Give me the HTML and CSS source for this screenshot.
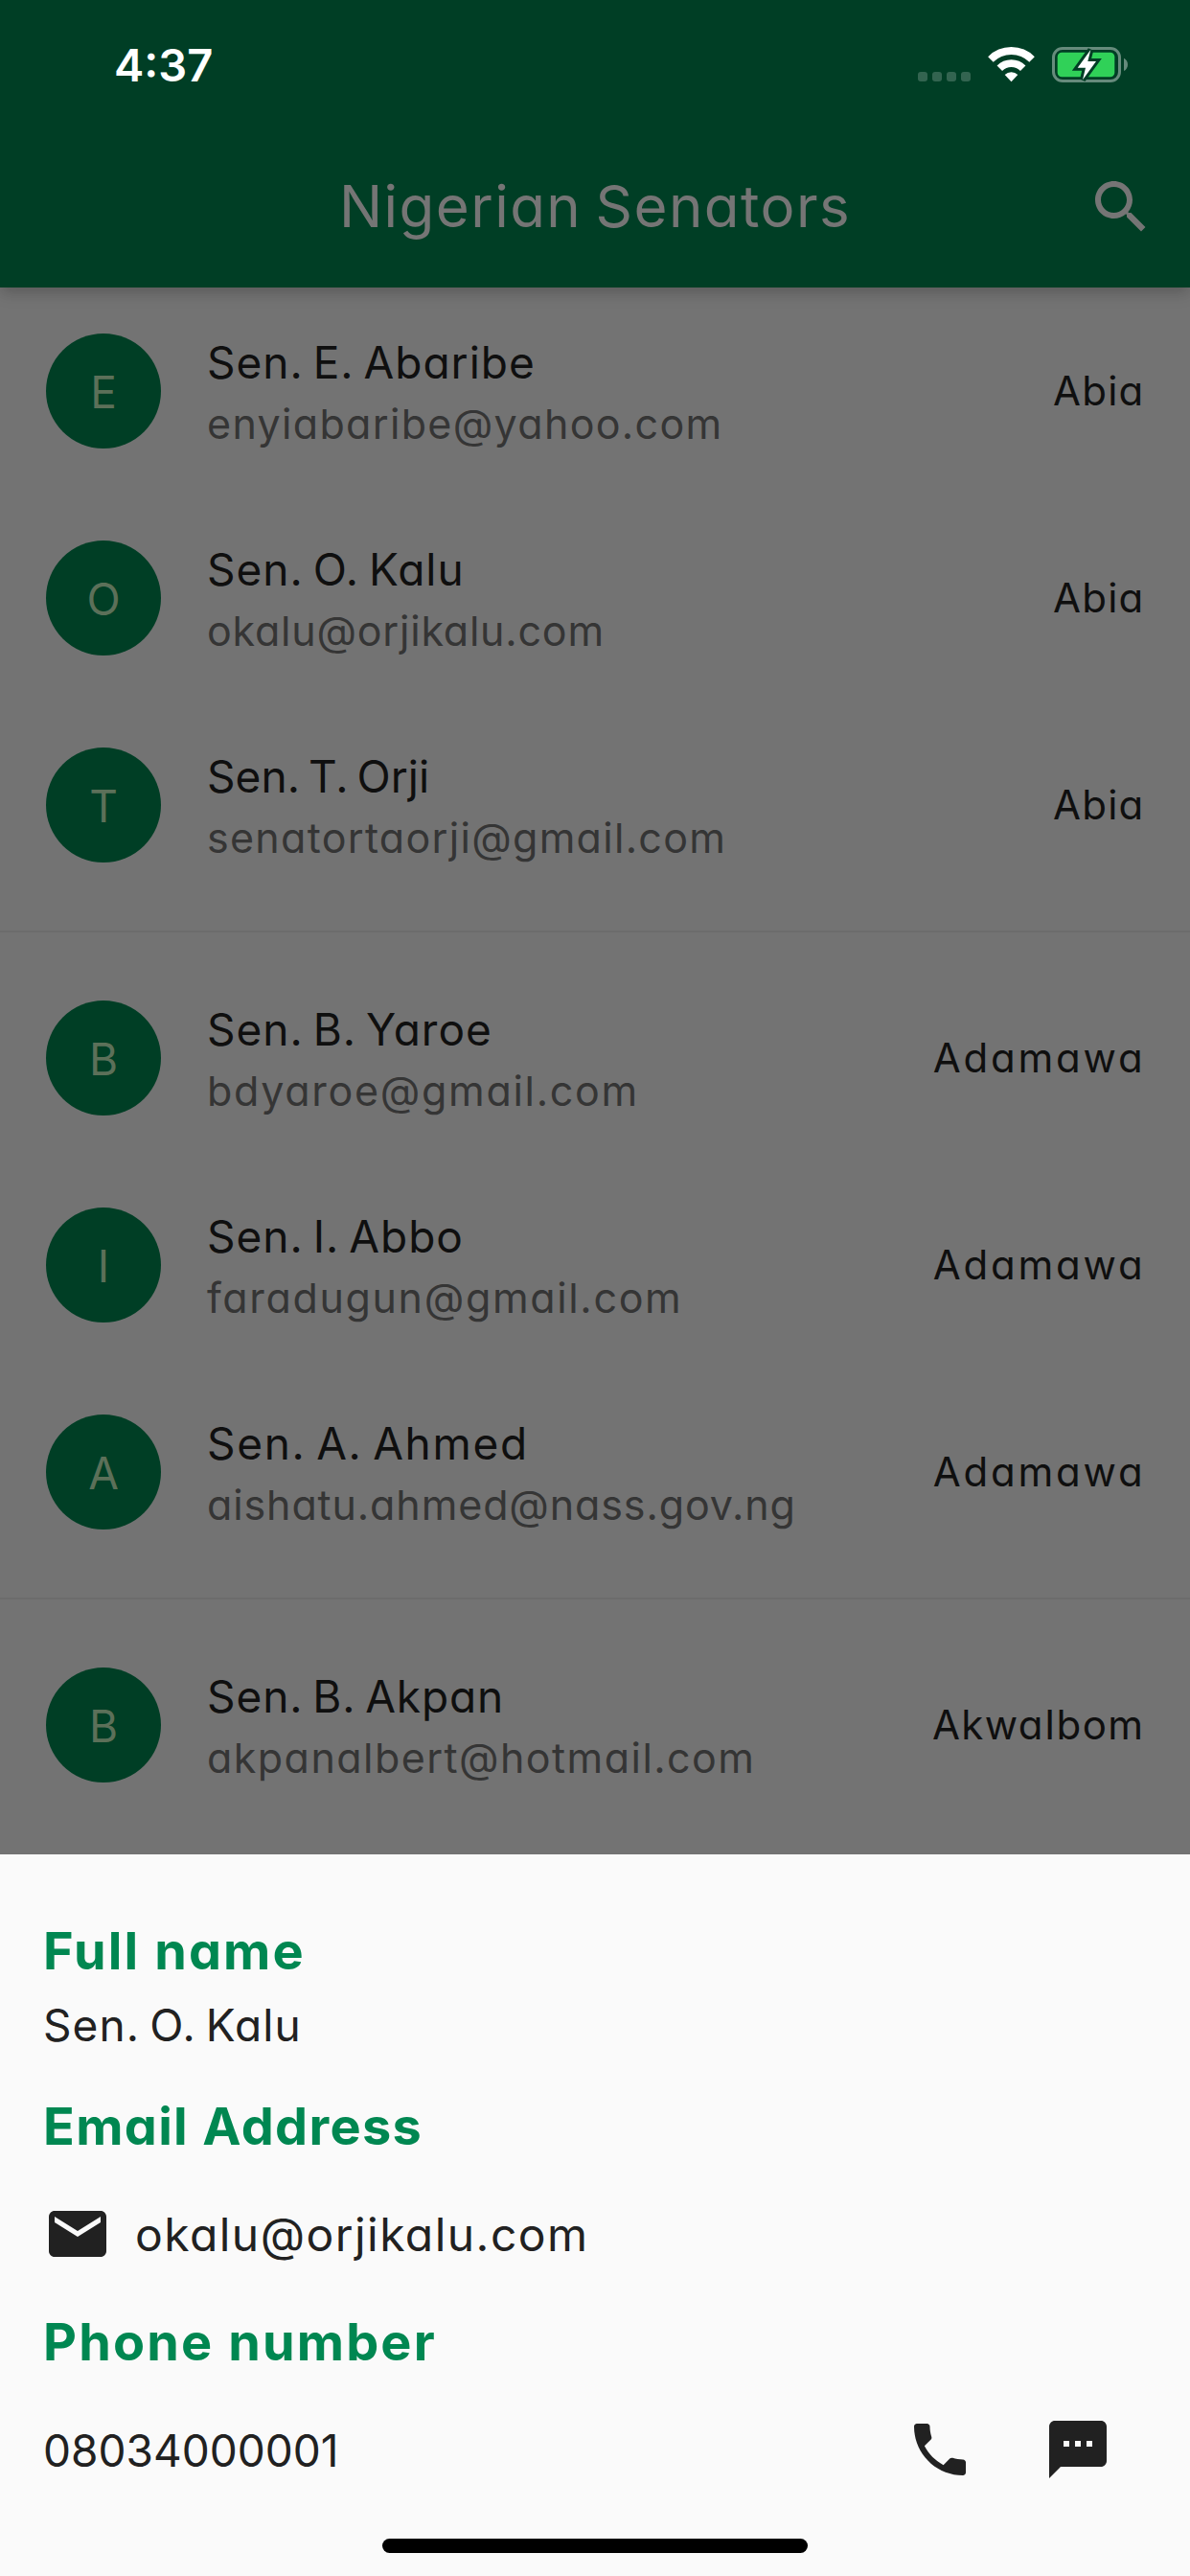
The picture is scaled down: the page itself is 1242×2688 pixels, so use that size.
FILE: index.html
```html
<!DOCTYPE html>
<html lang="en">
<head>
<meta charset="utf-8">
<title>Nigerian Senators</title>
<link rel="stylesheet" href="styles.css">
</head>
<body>
<div class="screen">
  <header class="app-bar">
    <div class="status-bar">
      <span class="time">4:37</span>
      <div class="status-icons">
        <svg width="55" height="37" viewBox="0 0 55 37" fill="#fff" fill-opacity=".2">
          <rect x="0" y="26" width="10" height="10" rx="3"/><rect x="15" y="26" width="10" height="10" rx="3"/><rect x="30" y="26" width="10" height="10" rx="3"/><rect x="45" y="26" width="10" height="10" rx="3"/>
        </svg>
        <svg width="49" height="37" viewBox="-.5 0 49 37">
          <path d="M2.43 12.93A30.5 30.5 0 0 1 45.57 12.93M11.8 22.3A17.2 17.2 0 0 1 36.2 22.3" fill="none" stroke="#fff" stroke-width="7.8"/>
          <path d="M24 36.2L17.2 29A9.6 9.6 0 0 1 30.8 29Z" fill="#fff"/>
        </svg>
        <svg width="79" height="37" viewBox="0 0 79 37">
          <rect x="1.5" y="1.5" width="69" height="34" rx="9.5" fill="none" stroke="#668b7c" stroke-width="3"/>
          <path d="M75 11.7C80.3 14 80.3 22.7 75 25Z" fill="#668b7c"/>
          <rect x="5.7" y="5.7" width="59.6" height="25.6" rx="4.5" fill="#30d158"/>
          <path class="bolt" d="M40.3 3L26.7 21.7H35L32 34.3L46 15H37.3Z"/>
        </svg>
      </div>
    </div>
    <div class="toolbar">
      <h1 class="title">Nigerian Senators</h1>
      <svg class="icon search" viewBox="0 0 24 24"><path d="M15.5 14h-.79l-.28-.27C15.41 12.59 16 11.11 16 9.5 16 5.91 13.09 3 9.5 3S3 5.91 3 9.5 5.91 16 9.5 16c1.61 0 3.09-.59 4.23-1.57l.27.28v.79l5 4.99L20.49 19l-4.99-5zm-6 0C7.01 14 5 11.99 5 9.5S7.01 5 9.5 5 14 7.01 14 9.5 11.99 14 9.5 14z"/></svg>
    </div>
  </header>

  <main class="list">
    <div class="row abaribe"><div class="avatar">E</div><div class="info"><div class="name">Sen. E. Abaribe</div><div class="email">enyiabaribe@yahoo.com</div></div><div class="state abia">Abia</div></div>
    <div class="row kalu"><div class="avatar">O</div><div class="info"><div class="name">Sen. O. Kalu</div><div class="email">okalu@orjikalu.com</div></div><div class="state abia">Abia</div></div>
    <div class="row orji"><div class="avatar">T</div><div class="info"><div class="name">Sen. T. Orji</div><div class="email">senatortaorji@gmail.com</div></div><div class="state abia">Abia</div></div>
    <hr class="divider">
    <div class="row yaroe"><div class="avatar">B</div><div class="info"><div class="name">Sen. B. Yaroe</div><div class="email">bdyaroe@gmail.com</div></div><div class="state adamawa">Adamawa</div></div>
    <div class="row abbo"><div class="avatar">I</div><div class="info"><div class="name">Sen. I. Abbo</div><div class="email">faradugun@gmail.com</div></div><div class="state adamawa">Adamawa</div></div>
    <div class="row ahmed"><div class="avatar">A</div><div class="info"><div class="name">Sen. A. Ahmed</div><div class="email">aishatu.ahmed@nass.gov.ng</div></div><div class="state adamawa">Adamawa</div></div>
    <hr class="divider">
    <div class="row akpan"><div class="avatar">B</div><div class="info"><div class="name">Sen. B. Akpan</div><div class="email">akpanalbert@hotmail.com</div></div><div class="state akwaibom">AkwaIbom</div></div>
  </main>

  <section class="sheet">
    <h2 class="label label-name">Full name</h2>
    <p class="value value-name">Sen. O. Kalu</p>
    <h2 class="label label-email">Email Address</h2>
    <div class="contact">
      <svg class="icon" viewBox="0 0 24 24"><path d="M20 4H4c-1.1 0-1.99.9-1.99 2L2 18c0 1.1.9 2 2 2h16c1.1 0 2-.9 2-2V6c0-1.1-.9-2-2-2zm0 4l-8 5-8-5V6l8 5 8-5v2z"/></svg>
      <span class="value-email">okalu@orjikalu.com</span>
    </div>
    <h2 class="label label-phone">Phone number</h2>
    <div class="contact phone">
      <span class="value-phone">08034000001</span>
      <div class="actions">
        <svg class="icon" viewBox="0 0 24 24"><path d="M6.62 10.79c1.44 2.83 3.76 5.14 6.59 6.59l2.2-2.2c.27-.27.67-.36 1.02-.24 1.12.37 2.33.57 3.57.57.55 0 1 .45 1 1V20c0 .55-.45 1-1 1-9.39 0-17-7.61-17-17 0-.55.45-1 1-1h3.5c.55 0 1 .45 1 1 0 1.25.2 2.45.57 3.57.11.35.03.74-.25 1.02l-2.2 2.2z"/></svg>
        <svg class="icon" viewBox="0 0 24 24"><path d="M20 2H4c-1.1 0-1.99.9-1.99 2L2 22l4-4h14c1.1 0 2-.9 2-2V4c0-1.1-.9-2-2-2zM9 11H7V9h2v2zm4 0h-2V9h2v2zm4 0h-2V9h2v2z"/></svg>
      </div>
    </div>
    <div class="home-indicator"></div>
  </section>
</div>
</body>
</html>
```
FILE: styles.css
```css
* { box-sizing: border-box; margin: 0; padding: 0; }

body {
  background: #737373;
  font-family: Inter, sans-serif;
  font-feature-settings: "cv11";
}

.screen {
  display: flex;
  flex-direction: column;
  width: 1242px;
  height: 2688px;
  overflow: hidden;
}

.icon { display: block; flex: none; width: 72px; height: 72px; fill: #212121; }

/* App bar */
.app-bar {
  flex: none;
  height: 300px;
  background: #003e25;
  box-shadow: 0 5px 12px -3px rgba(0, 0, 0, .14), 0 8px 15px rgba(0, 0, 0, .1);
}

.status-bar {
  display: flex;
  justify-content: space-between;
  height: 132px;
  padding: 49px 65px 0 119px;
}

.time { color: #fff; font-size: 47px; font-weight: 600; line-height: 38px; }

.status-icons { display: flex; gap: 18px; }
.status-icons svg { display: block; overflow: visible; }
.bolt { fill: #fff; stroke: #003e25; stroke-width: 6; paint-order: stroke; }

.toolbar {
  display: grid;
  grid-template-columns: 72px 1fr 72px;
  align-items: center;
  height: 168px;
  padding: 0 36px;
}

.title {
  grid-column: 2;
  padding-bottom: 3px;
  color: #757575;
  font-size: 60px;
  font-weight: 400;
  letter-spacing: 1.45px;
  word-spacing: -4px;
  text-align: center;
  white-space: nowrap;
}

.search { fill: #757575; }

/* Senator list */
.list { flex: none; height: 1635px; overflow: hidden; }

.row {
  display: flex;
  align-items: center;
  height: 216px;
  padding: 0 48px;
}

.avatar {
  display: flex;
  align-items: center;
  justify-content: center;
  flex: none;
  width: 120px;
  height: 120px;
  padding-top: 2px;
  border-radius: 50%;
  background: #003e25;
  color: #5c7059;
  font-size: 46px;
}

.info { flex: 1; padding: 4px 0 0 48px; line-height: 64px; white-space: nowrap; }

.name { color: #0f0f0f; font-size: 46px; letter-spacing: 1px; word-spacing: -4px; }
.email { color: #353535; font-size: 43px; }
.state { padding-bottom: 2px; color: #0f0f0f; font-size: 42px; }

.divider { height: 48px; border: 0; background: linear-gradient(#6c6c6c, #6c6c6c) 0 23px / 100% 2px no-repeat; }

/* Tracking per entry */
.abaribe .email { letter-spacing: 1.33px; }
.kalu .email { letter-spacing: .78px; }
.orji .name { letter-spacing: .05px; }
.orji .email { letter-spacing: 1.3px; }
.yaroe .email { letter-spacing: 1.7px; }
.abbo .email { letter-spacing: 1.66px; }
.ahmed .name { letter-spacing: 1.69px; }
.ahmed .email { letter-spacing: .88px; }
.akpan .name { letter-spacing: .9px; }
.akpan .email { letter-spacing: 1.45px; }
.abia { margin-right: -.5px; letter-spacing: 1.2px; }
.adamawa { margin-right: -1.5px; letter-spacing: 2.8px; }
.akwaibom { margin-right: -.5px; letter-spacing: 1.4px; }

/* Contact sheet */
.sheet {
  flex: 1;
  padding: 61px 81px 0 45px;
  background: #fafafa;
  color: #212121;
}

.label { color: #008751; font-size: 54px; font-weight: 700; line-height: 80px; }
.label-name { letter-spacing: 2.12px; }
.label-email { margin-top: 34px; letter-spacing: 1.34px; }
.label-phone { margin-top: 37px; letter-spacing: 2.15px; }

.value { margin-top: 5px; line-height: 64px; }
.value-name { font-size: 46px; letter-spacing: 1.1px; word-spacing: -4px; }

.contact { display: flex; align-items: center; gap: 24px; height: 72px; margin-top: 36px; }
.value-email { font-size: 48px; letter-spacing: 1.45px; }

.phone { justify-content: space-between; }
.value-phone { padding-top: 2px; font-size: 46px; letter-spacing: 0; }
.actions { display: flex; gap: 72px; }

.home-indicator {
  width: 444px;
  height: 15px;
  margin: 57px 0 0 354px;
  border-radius: 8px;
  background: #000;
}
```
